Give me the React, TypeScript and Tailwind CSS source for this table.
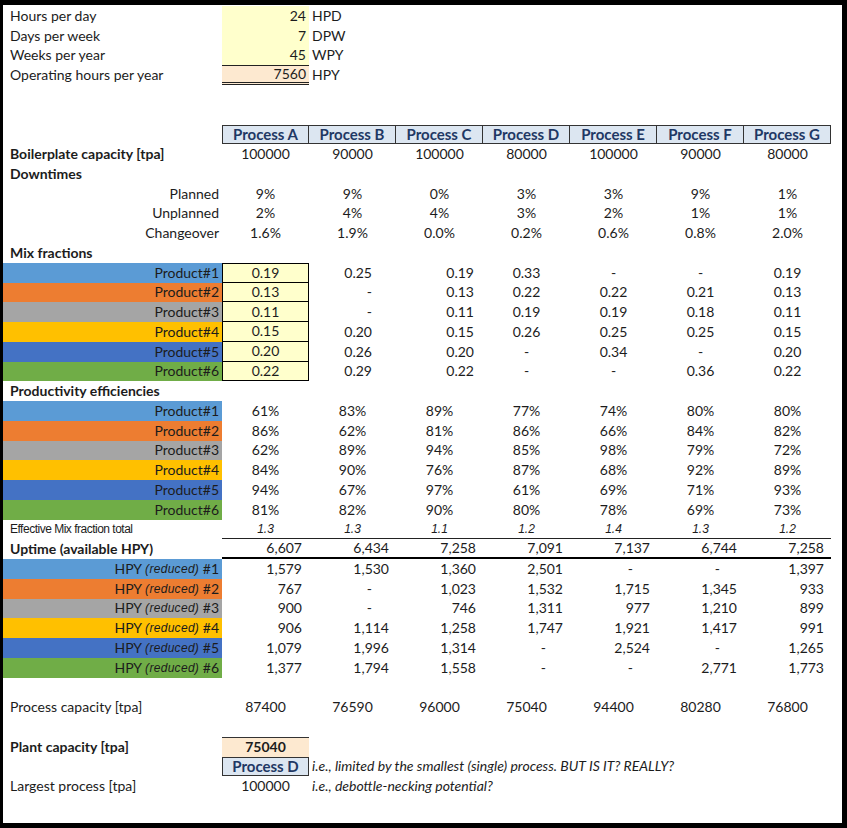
import React from 'react';

const row = 'grid grid-cols-[219px_repeat(7,87px)] h-[19.75px]';

const productBg = [
  'bg-[#5b9bd5]',
  'bg-[#ed7d31]',
  'bg-[#a5a5a5]',
  'bg-[#ffc000]',
  'bg-[#4472c4]',
  'bg-[#70ad47]',
];

const processes = ['A', 'B', 'C', 'D', 'E', 'F', 'G'];
const boilerplate = ['100000', '90000', '100000', '80000', '100000', '90000', '80000'];
const planned = ['9%', '9%', '0%', '3%', '3%', '9%', '1%'];
const unplanned = ['2%', '4%', '4%', '3%', '2%', '1%', '1%'];
const changeover = ['1.6%', '1.9%', '0.0%', '0.2%', '0.6%', '0.8%', '2.0%'];

const mix = [
  ['0.19', '0.25', '0.19', '0.33', '-', '-', '0.19'],
  ['0.13', '-', '0.13', '0.22', '0.22', '0.21', '0.13'],
  ['0.11', '-', '0.11', '0.19', '0.19', '0.18', '0.11'],
  ['0.15', '0.20', '0.15', '0.26', '0.25', '0.25', '0.15'],
  ['0.20', '0.26', '0.20', '-', '0.34', '-', '0.20'],
  ['0.22', '0.29', '0.22', '-', '-', '0.36', '0.22'],
];

const efficiency = [
  ['61%', '83%', '89%', '77%', '74%', '80%', '80%'],
  ['86%', '62%', '81%', '86%', '66%', '84%', '82%'],
  ['62%', '89%', '94%', '85%', '98%', '79%', '72%'],
  ['84%', '90%', '76%', '87%', '68%', '92%', '89%'],
  ['94%', '67%', '97%', '61%', '69%', '71%', '93%'],
  ['81%', '82%', '90%', '80%', '78%', '69%', '73%'],
];

const effectiveMix = ['1.3', '1.3', '1.1', '1.2', '1.4', '1.3', '1.2'];
const uptime = ['6,607', '6,434', '7,258', '7,091', '7,137', '6,744', '7,258'];

const hpy = [
  ['1,579', '1,530', '1,360', '2,501', '-', '-', '1,397'],
  ['767', '-', '1,023', '1,532', '1,715', '1,345', '933'],
  ['900', '-', '746', '1,311', '977', '1,210', '899'],
  ['906', '1,114', '1,258', '1,747', '1,921', '1,417', '991'],
  ['1,079', '1,996', '1,314', '-', '2,524', '-', '1,265'],
  ['1,377', '1,794', '1,558', '-', '-', '2,771', '1,773'],
];

const capacity = ['87400', '76590', '96000', '75040', '94400', '80280', '76800'];

// mix fractions in B and C sit to the right, the rest are centred
const mixAlign = [
  'justify-center',
  'justify-end pr-[24px]',
  'justify-end pr-[9px]',
  'justify-center',
  'justify-center',
  'justify-center',
  'justify-center',
];

const Label = ({ children, bold }: { children: React.ReactNode; bold?: boolean }) => (
  <div className={`flex items-center pl-[7px] whitespace-nowrap ${bold ? 'font-bold' : ''}`}>{children}</div>
);

const Centered = ({ values }: { values: string[] }) => (
  <>
    {values.map((v, i) => (
      <div key={i} className="flex items-center justify-center">
        {v}
      </div>
    ))}
  </>
);

const Blank = () => <div className={row} />;

export default function App() {
  return (
    <div className="w-[847px] h-[828px] bg-black pt-[5px] pl-[3px] pr-[5px] pb-[5px]">
      <div className="h-full w-full bg-white pt-px text-[14px] leading-none text-[#1c1c1c] font-['Lato',sans-serif]">
        {/* operating hours */}
        {[
          ['Hours per day', '24', 'HPD'],
          ['Days per week', '7', 'DPW'],
          ['Weeks per year', '45', 'WPY'],
        ].map(([l, v, u]) => (
          <div key={l} className={row}>
            <Label>{l}</Label>
            <div className="flex items-center justify-end pr-[3px] bg-[#ffffcc]">{v}</div>
            <div className="flex items-center pl-[3px]">{u}</div>
          </div>
        ))}
        <div className={row}>
          <Label>Operating hours per year</Label>
          <div className="flex items-center justify-end pr-[3px] bg-[#fde9d0] border-t border-b-[3px] border-double border-[#222]">
            7560
          </div>
          <div className="flex items-center pl-[3px]">HPY</div>
        </div>
        <Blank />
        <Blank />

        {/* process header */}
        <div className={row}>
          <div />
          {processes.map((p, i) => (
            <div
              key={p}
              className={`flex items-center justify-center bg-[#dce6f1] border-y border-r border-[#333] text-[15px] font-bold text-[#1f3864] ${i === 0 ? 'border-l' : ''}`}
            >
              Process {p}
            </div>
          ))}
        </div>
        <div className={row}>
          <Label bold>Boilerplate capacity [tpa]</Label>
          <Centered values={boilerplate} />
        </div>
        <div className={row}>
          <Label bold>Downtimes</Label>
        </div>
        {[
          ['Planned', planned],
          ['Unplanned', unplanned],
          ['Changeover', changeover],
        ].map(([l, vals]) => (
          <div key={l as string} className={row}>
            <div className="flex items-center justify-end pr-[3px]">{l as string}</div>
            <Centered values={vals as string[]} />
          </div>
        ))}

        {/* mix fractions */}
        <div className={row}>
          <Label bold>Mix fractions</Label>
        </div>
        {mix.map((vals, r) => (
          <div key={r} className={row}>
            <div className={`flex items-center justify-end pr-[3px] ${productBg[r]}`}>Product#{r + 1}</div>
            {vals.map((v, i) =>
              i === 0 ? (
                <div
                  key={i}
                  className={`flex items-center justify-center bg-[#ffffcc] border-x border-b border-black ${r === 0 ? 'border-t' : ''}`}
                >
                  {v}
                </div>
              ) : (
                <div key={i} className={`flex items-center ${mixAlign[i]}`}>
                  {v}
                </div>
              )
            )}
          </div>
        ))}

        {/* productivity */}
        <div className={row}>
          <Label bold>Productivity efficiencies</Label>
        </div>
        {efficiency.map((vals, r) => (
          <div key={r} className={row}>
            <div className={`flex items-center justify-end pr-[3px] ${productBg[r]}`}>Product#{r + 1}</div>
            <Centered values={vals} />
          </div>
        ))}
        <div className={row}>
          <div className="flex items-center pl-[7px] font-['Liberation_Sans',sans-serif] text-[12px] tracking-[-0.5px] whitespace-nowrap">
            Effective Mix fraction total
          </div>
          {effectiveMix.map((v, i) => (
            <div
              key={i}
              className="flex items-center justify-center border-b border-[#222] italic font-['Liberation_Sans',sans-serif] text-[12px]"
            >
              {v}
            </div>
          ))}
        </div>
        <div className={row}>
          <Label bold>Uptime (available HPY)</Label>
          {uptime.map((v, i) => (
            <div key={i} className="flex items-center justify-end pr-[7px] border-b-2 border-black">
              {v}
            </div>
          ))}
        </div>
        {hpy.map((vals, r) => (
          <div key={r} className={row}>
            <div className={`flex items-center justify-end pr-[3px] whitespace-nowrap ${productBg[r]}`}>
              HPY&nbsp;
              <span className="italic font-['Liberation_Sans',sans-serif] text-[12px] tracking-[0.3px]">(reduced)</span>
              &nbsp;#{r + 1}
            </div>
            {vals.map((v, i) => (
              <div key={i} className={`flex items-center justify-end ${v === '-' ? 'pr-[24px]' : 'pr-[7px]'}`}>
                {v}
              </div>
            ))}
          </div>
        ))}
        <Blank />
        <div className={row}>
          <Label>Process capacity [tpa]</Label>
          <Centered values={capacity} />
        </div>
        <Blank />

        {/* plant summary */}
        <div className={row}>
          <Label bold>Plant capacity [tpa]</Label>
          <div className="flex items-center justify-center bg-[#fde9d0] border-t border-[#333] font-bold">75040</div>
        </div>
        <div className={row}>
          <div />
          <div className="flex items-center justify-center bg-[#dce6f1] border border-[#333] text-[15px] font-bold text-[#1f3864]">
            Process D
          </div>
          <div className="col-span-6 flex items-center pl-[3px] italic whitespace-nowrap text-[14px]">
            i.e., limited by the smallest (single) process. BUT IS IT? REALLY?
          </div>
        </div>
        <div className={row}>
          <Label>Largest process [tpa]</Label>
          <div className="flex items-center justify-center">100000</div>
          <div className="col-span-6 flex items-center pl-[3px] italic whitespace-nowrap text-[14px]">
            i.e., debottle-necking potential?
          </div>
        </div>
      </div>
    </div>
  );
}
